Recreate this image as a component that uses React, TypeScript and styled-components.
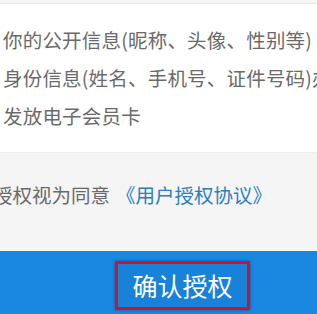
import * as React from 'react';
import styled, { createGlobalStyle } from 'styled-components';

const GlobalStyle = createGlobalStyle`
    html, body {
        margin: 0;
        padding: 0;
        background: #f5f5f5;
        overflow: hidden;
    }
    body {
        font-family: "Noto Sans CJK SC", "Noto Sans", sans-serif;
    }
`;

const Page = styled.div`
    width: 317px;
    height: 314px;
    overflow: hidden;
    display: flex;
    flex-direction: column;
    padding-top: 3px;
    box-sizing: border-box;
`;

const InfoPanel = styled.div`
    background: #ffffff;
    border-top: 1px solid #e8e8e8;
    border-bottom: 1px solid #ececec;
    padding: 17px 0 17px 3px;
`;

const InfoLine = styled.div`
    font-size: 19.5px;
    line-height: 38px;
    color: #6a6a6a;
    white-space: nowrap;
    letter-spacing: 0.2px;
`;

const AgreeRow = styled.div`
    height: 98px;
    box-sizing: border-box;
    padding-top: 29px;
    line-height: 26px;
    font-size: 19.5px;
    color: #6a6a6a;
    white-space: nowrap;
    margin-left: -46px;
`;

const Link = styled.span`
    color: #2c7dc2;
    margin-left: 6px;
`;

const BottomBar = styled.div`
    flex: 1;
    background: #1a88e0;
    display: flex;
    justify-content: center;
    padding: 10px 0 0 48px;
    box-sizing: border-box;
`;

const ConfirmButton = styled.button`
    width: 135px;
    height: 49px;
    border: 3px solid #c8162e;
    background: #1782d8;
    box-shadow: 0 0 3px rgba(0, 40, 90, 0.5);
    color: #ffffff;
    font-family: "Noto Sans CJK SC", sans-serif;
    font-size: 25px;
    padding: 0;
    line-height: 1;
`;

export default function App() {
    return <Page>
        <GlobalStyle />
        <InfoPanel>
            <InfoLine>你的公开信息(昵称、头像、性别等)</InfoLine>
            <InfoLine>身份信息(姓名、手机号、证件号码)办理</InfoLine>
            <InfoLine>发放电子会员卡</InfoLine>
        </InfoPanel>
        <AgreeRow>
            确认授权视为同意<Link>《用户授权协议》</Link>
        </AgreeRow>
        <BottomBar>
            <ConfirmButton>确认授权</ConfirmButton>
        </BottomBar>
    </Page>
}
